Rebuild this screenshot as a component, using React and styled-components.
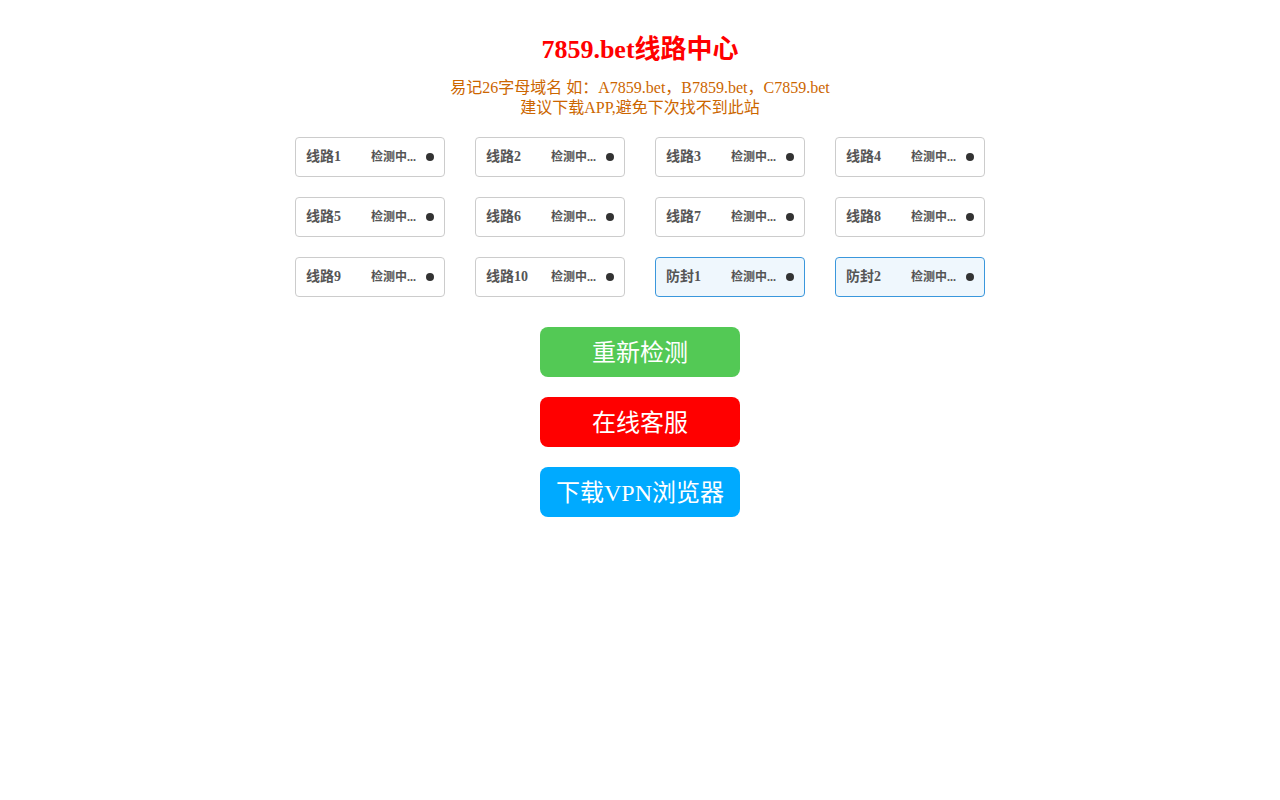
import styled, { createGlobalStyle } from 'styled-components'

const lines = [
	{ name: '线路1' }, { name: '线路2' }, { name: '线路3' }, { name: '线路4' },
	{ name: '线路5' }, { name: '线路6' }, { name: '线路7' }, { name: '线路8' },
	{ name: '线路9' }, { name: '线路10' },
	{ name: '防封1', guard: true }, { name: '防封2', guard: true },
]

export default function App() {
	return (
		<>
			<GlobalStyle />
			<Page>
				<Title>7859.bet线路中心</Title>
				<Tip>
					易记26字母域名 如：A7859.bet，B7859.bet，C7859.bet
					<br />
					建议下载APP,避免下次找不到此站
				</Tip>
				<Grid>
					{lines.map((l) => (
						<LineCard key={l.name} $guard={l.guard}>
							<LineName>{l.name}</LineName>
							<Status>
								<StatusText>检测中...</StatusText>
								<Dot />
							</Status>
						</LineCard>
					))}
				</Grid>
				<Actions>
					<ActionButton $bg='#53c955'>重新检测</ActionButton>
					<ActionButton $bg='#ff0000'>在线客服</ActionButton>
					<ActionButton $bg='#00aaff'>下载VPN浏览器</ActionButton>
				</Actions>
			</Page>
		</>
	)
}

const GlobalStyle = createGlobalStyle`
	body {
		margin: 0;
		background: #fff;
		font-family: "Liberation Serif", "Noto Sans CJK SC", serif;
	}
`

const Page = styled.div`
	display: flex;
	flex-direction: column;
	align-items: center;
	padding-top: 34px;
`

const Title = styled.h1`
	margin: 0;
	font-size: 26px;
	line-height: 32px;
	font-weight: bold;
	color: #ff0000;
`

const Tip = styled.p`
	margin: 12px 0 0;
	font-size: 16px;
	line-height: 20px;
	color: #cc6600;
	text-align: center;
`

const Grid = styled.div`
	display: grid;
	grid-template-columns: repeat(4, 150px);
	column-gap: 30px;
	row-gap: 20px;
	margin-top: 19px;
`

const LineCard = styled.div`
	box-sizing: border-box;
	height: 40px;
	display: flex;
	align-items: center;
	justify-content: space-between;
	padding: 0 10px;
	border: 1px solid ${(p) => (p.$guard ? '#3a97dc' : '#cccccc')};
	border-radius: 4px;
	background: ${(p) => (p.$guard ? '#eff7fd' : '#fff')};
`

const LineName = styled.span`
	font-size: 14px;
	line-height: 16px;
	font-weight: bold;
	color: #555;
	margin-top: -1px;
`

const Status = styled.span`
	display: flex;
	align-items: center;
	gap: 10px;
	font-size: 12px;
	font-weight: bold;
	color: #555;
`

const StatusText = styled.span`
	line-height: 14px;
	margin-top: -1px;
`

const Dot = styled.i`
	width: 8px;
	height: 8px;
	border-radius: 50%;
	background: #333;
`

const Actions = styled.div`
	display: flex;
	flex-direction: column;
	gap: 20px;
	margin-top: 30px;
`

const ActionButton = styled.button`
	width: 200px;
	height: 50px;
	border: none;
	border-radius: 8px;
	background: ${(p) => p.$bg};
	color: #fff;
	font-family: inherit;
	font-size: 24px;
	padding: 0 0 3px;
	cursor: pointer;
`
